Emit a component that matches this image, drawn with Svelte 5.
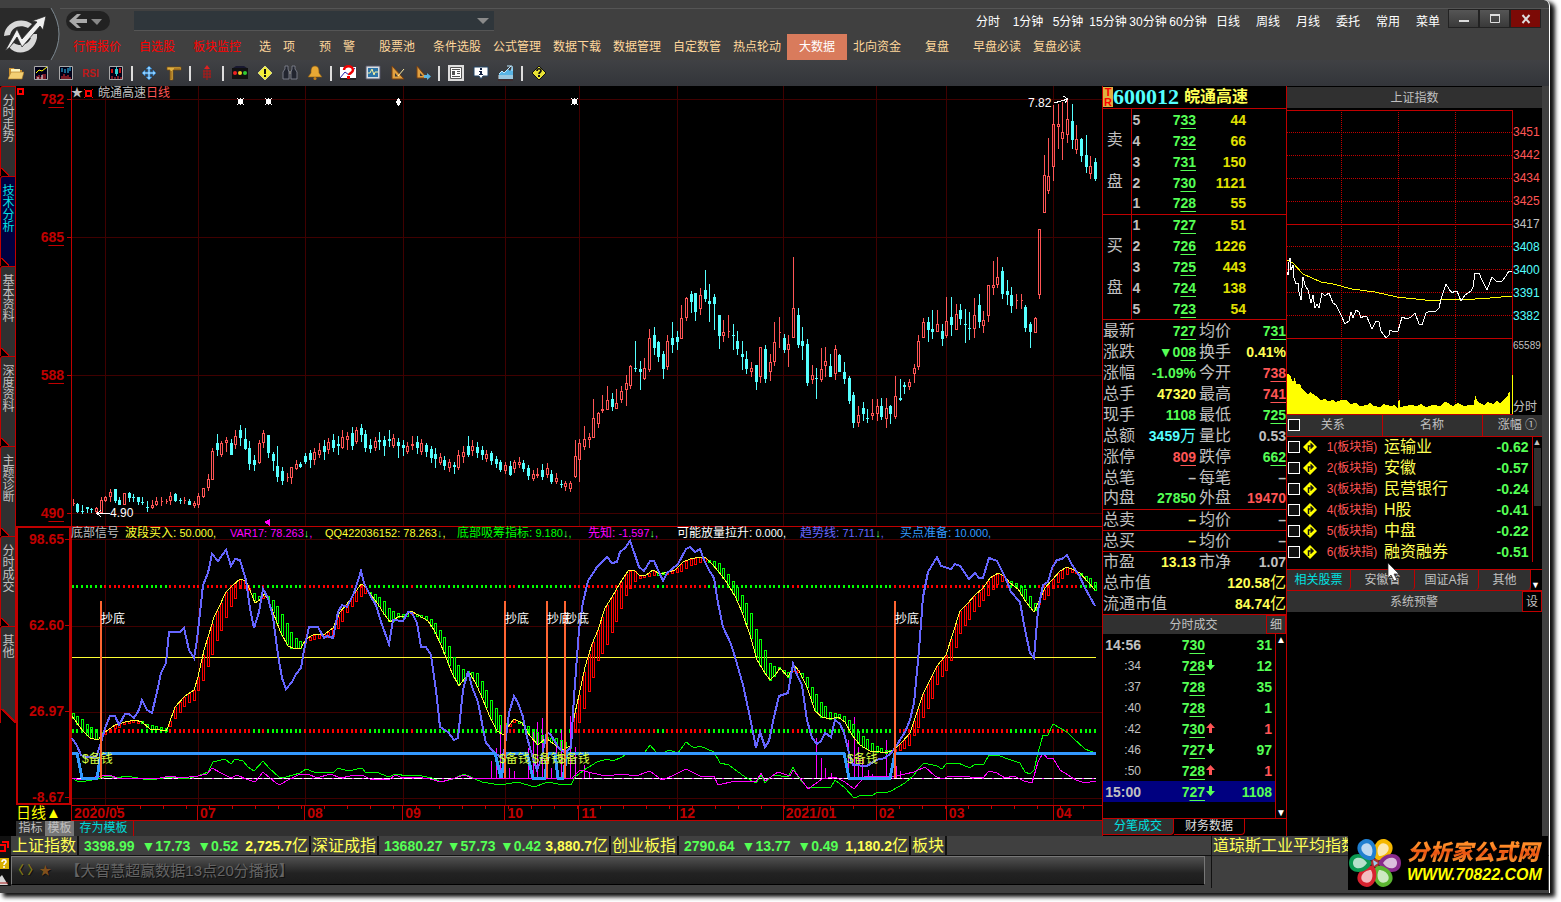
<script>
  const periods = ['分时', '1分钟', '5分钟', '15分钟', '30分钟', '60分钟', '日线', '周线', '月线', '委托', '常用', '菜单'];
  const menus = [
    '行情报价', '自选股', '板块监控', '选　项', '预　警', '股票池', '条件选股', '公式管理', '数据下载',
    '数据管理', '自定数管', '热点轮动', '大数据', '北向资金', '复盘', '早盘必读', '复盘必读',
  ];
  const sideTabs = ['分时走势', '技术分析', '基本资料', '深度资料', '主题诊断', '分时成交', '其他'];

  // '|' is a separator
  const tools = [
    'folder', 'line', 'kline', 'rsi', 'candle', '|', 'move', 'ruler', '|', 'chip', '|', 'lights', 'warn',
    'binoc', 'bell', '|', 'what', 'screen', 'tri', 'tri2', '|', 'news', 'info', 'trend', '|', 'help',
  ];

  const icons = {
    folder: '<path d="M1 3h5l1 2h7v9H1z" fill="#c98f2e"/><path d="M3 4h9v3H3z" fill="#fff3b8"/><path d="M0 14l3-7h13l-2 7z" fill="#f3cf73" stroke="#a87320" stroke-width=".6"/>',
    line: '<path d="M1.500 1.500h13v13h-13z" fill="#000018" stroke="#aaa"/><path d="M3 8l3-3 3 1 5-4" stroke="#ff0" fill="none"/><path d="M4 14v-3m2 3v-4m2 4v-2m2 2V9m2 5v-5" stroke="#e33"/><path d="M5 14v-2m4 2v-4" stroke="#fff"/>',
    kline: '<path d="M1.500 1.500h13v13h-13z" fill="#000018" stroke="#aaa"/><path d="M4 3v4m3-3v4m3-5v5m2-6v4" stroke="#3cf"/><path d="M4 14v-3m2 3v-5m2 5v-3m2 3v-4m2 4v-2" stroke="#e33"/>',
    rsi: '<text x="-1" y="12" font-size="10" font-weight="bold" fill="#c01818" font-family="Liberation Sans">RSI</text>',
    candle: '<path d="M1.500 1.500h13v13h-13z" fill="#000018" stroke="#aaa"/><path d="M3 4h2v4H3zM11 3h2v5h-2z" fill="#c11"/><path d="M7 4h3v5H7z" fill="#3cc"/><path d="M8.500 2v9" stroke="#3cc"/><path d="M4 14v-3m3 3v-2m3 2v-3m3 3v-2" stroke="#e33"/>',
    move: '<path d="M8 1l3 3H9v3h3V5l3 3-3 3V9H9v3h2l-3 3-3-3h2V9H4v2L1 8l3-3v2h3V4H5z" fill="#8fd0ff" stroke="#2878c0" stroke-width=".7"/>',
    ruler: '<path d="M1 2h14v3H7v10H4V5H1z" fill="#e0b040" stroke="#7a4d10" stroke-width=".7"/><path d="M9 3v2m2-2v2m2-2v2M4 7h2M4 9h2m-2 2h2m-2 2h2" stroke="#7a4d10"/>',
    chip: '<path d="M8 1v14M5 5v8m6-8v8M4 6h8m-8 3h8m-8 3h8" stroke="#b01818" stroke-width="1"/><path d="M8 0l3 4H5z" fill="#d22"/>',
    lights: '<path d="M0 3h16v11H0z" fill="#111"/><path d="M1 3l3-2h8l3 2z" fill="#181830"/><circle cx="3" cy="8" r="2" fill="#e22"/><circle cx="8" cy="8" r="2" fill="#ec2"/><circle cx="13" cy="8" r="2" fill="#3c3"/>',
    warn: '<path d="M8 1l7 7-7 7-7-7z" fill="#f2ee3a" stroke="#f7f7c0" stroke-width=".6"/><path d="M7 4h2v5H7zM7 10h2v2H7z" fill="#111"/>',
    binoc: '<path d="M3 1h3v3l1 3v7H1V7l2-3zM10 1h3v3l2 3v7H9V7l1-3z" fill="#22252f" stroke="#888c98" stroke-width=".8"/><path d="M7 6h2v3H7z" fill="#777"/>',
    bell: '<path d="M8 1c4 0 4 4 4 7l3 4H1l3-4c0-3 0-7 4-7z" fill="#e8a834" stroke="#8c5a10" stroke-width=".6"/><circle cx="8" cy="13.500" r="1.500" fill="#c98018"/>',
    what: '<path d="M0 2h16v12H0z" fill="#fff"/><path d="M0 13l5-6 4 3 6-7" stroke="#22a" fill="none"/><path d="M0 14h16" stroke="#222" stroke-width="2"/><path d="M4 5c0-5 9-5 9 0 0 3-4 3-4 5" stroke="#e00" stroke-width="2.500" fill="none"/><path d="M7 11h3v3H7z" fill="#e00"/>',
    screen: '<path d="M1 1h14v13H1z" fill="#d8dee4" stroke="#556"/><path d="M3 3h10v9H3z" fill="#2d74a8"/><path d="M3 8h2l2-4 2 6 1-3h3" stroke="#f4f0a0" fill="none"/>',
    tri: '<path d="M2 1l12 13H2z" fill="#e0a040" stroke="#7a4010"/><path d="M5 8l3 3.500H5z" fill="#35363a"/><path d="M8 11l6-7" stroke="#ffe9a0"/>',
    tri2: '<path d="M2 1l10 12H2z" fill="#e0a040" stroke="#7a4010"/><path d="M5 8l3 3H5z" fill="#35363a"/><path d="M9 10h3V8l4 3.500-4 3.500v-2H9z" fill="#5ab4e0"/>',
    news: '<path d="M0 0h16v16H0z" fill="#ddd"/><path d="M2.500 2.500h11v11h-11z" fill="#fff" stroke="#555"/><path d="M4 4.500h8M4 11.500h8" stroke="#555"/><path d="M4 6h3v4H4z" fill="#555"/><path d="M9 6.500h3m-3 2h3" stroke="#555"/>',
    info: '<path d="M1 2h14v9h-5l-2 3-2-3H1z" fill="#fff" stroke="#246"/><path d="M7 3h2v2H7zM6 6h3v3h1v1H6V9h1V7H6z" fill="#124"/>',
    trend: '<path d="M1 14V9l3-3 2 2 4-4 2 2 3-5v13z" fill="#58b4e4"/><path d="M1 9l3-3 2 2 7-7m-4 0h5v5" stroke="#bfe8ff" fill="none"/><path d="M0 11h15M0 13h15" stroke="#ddd"/><path d="M0 15h15" stroke="#422"/>',
    help: '<path d="M8 1l7 7-7 7-7-7z" fill="#e8e234" stroke="#111" stroke-width="1"/><path d="M6 6c0-3 4-3 4 0 0 1-2 1-2 3" stroke="#111" stroke-width="1.700" fill="none"/><path d="M7 10h2v2H7z" fill="#111"/>',
  };

  // direction (r = up day, c = down day), high, body top, body bottom, low; three units to a pixel
  const kline = `r1257,1269,1271,1278 c1268,1271,1296,1299 c1275,1293,1295,1302 c1280,1281,1286,1298 c1284,1286,1289,1298
    r1280,1284,1296,1300 r1250,1260,1298,1300 r1247,1251,1263,1266 r1228,1237,1252,1267 c1227,1227,1263,1268
    c1250,1259,1274,1275 r1238,1240,1274,1275 c1235,1239,1254,1266 c1242,1251,1253,1265 c1250,1251,1266,1276
    c1251,1265,1267,1274 c1262,1281,1283,1296 r1260,1275,1284,1288 r1252,1262,1275,1277 r1250,1263,1265,1278
    r1256,1262,1264,1272 r1236,1249,1263,1274 c1239,1242,1264,1267 c1253,1260,1262,1271 r1252,1260,1262,1273
    c1258,1263,1274,1276 r1262,1270,1279,1285 r1240,1249,1274,1284 r1224,1225,1250,1254 r1182,1197,1225,1233
    r1105,1113,1199,1200 c1061,1089,1109,1127 r1083,1089,1125,1131 r1070,1080,1089,1116 c1077,1090,1124,1125
    r1050,1067,1096,1108 c1035,1050,1074,1098 c1044,1077,1107,1110 c1083,1104,1152,1169 c1125,1140,1155,1173
    r1080,1090,1150,1152 r1050,1060,1088,1104 c1065,1066,1119,1134 c1116,1121,1143,1172 c1098,1158,1190,1206
    c1162,1174,1203,1214 r1179,1191,1193,1206 r1160,1162,1193,1212 r1140,1152,1168,1169 c1145,1151,1160,1165
    c1118,1128,1146,1152 c1110,1120,1140,1164 r1104,1116,1140,1155 r1090,1110,1125,1134 c1080,1098,1116,1140
    r1074,1086,1110,1122 c1062,1080,1104,1116 c1068,1092,1098,1125 r1050,1071,1104,1107 r1056,1068,1080,1110
    c1040,1059,1098,1110 r1041,1050,1086,1092 c1032,1045,1065,1086 c1050,1062,1104,1116 c1076,1095,1107,1119
    r1071,1083,1104,1113 c1056,1080,1086,1110 c1068,1080,1098,1128 c1050,1077,1083,1101 r1062,1074,1098,1104
    c1074,1086,1098,1134 c1080,1095,1104,1128 r1086,1098,1116,1122 r1068,1092,1098,1110 c1068,1086,1104,1122
    r1077,1089,1116,1125 c1089,1095,1116,1131 c1098,1107,1134,1149 c1104,1122,1137,1164 r1119,1131,1149,1155
    c1128,1140,1158,1170 r1137,1146,1164,1176 c1146,1155,1161,1182 r1110,1125,1164,1170 r1098,1116,1131,1149
    c1068,1098,1125,1131 r1080,1098,1113,1128 c1086,1101,1119,1134 c1098,1110,1125,1140 r1110,1122,1137,1146
    c1113,1119,1143,1155 c1128,1137,1152,1164 c1140,1146,1170,1176 r1146,1155,1173,1182 c1143,1158,1185,1188
    r1140,1146,1167,1179 r1131,1146,1155,1164 c1140,1149,1167,1176 c1155,1164,1188,1200 r1170,1182,1197,1203
    r1164,1182,1188,1194 c1152,1170,1191,1200 r1149,1164,1185,1194 c1170,1182,1206,1212 r1180,1194,1206,1212
    c1200,1213,1215,1224 r1203,1209,1220,1233 r1203,1209,1227,1236 r1080,1129,1191,1194 r1077,1089,1140,1206
    r1038,1077,1101,1110 r1059,1071,1079,1104 r957,1014,1074,1075 r997,999,1031,1044 r945,987,992,999
    r918,960,990,991 c939,957,981,993 r927,969,987,988 r918,933,960,969 r885,909,930,978 r855,857,918,926
    c783,864,866,876 c843,867,876,930 r833,864,897,899 r747,773,870,875 c741,765,804,825 c783,786,830,846
    c813,822,867,897 r765,783,860,870 c726,773,795,819 c753,771,786,810 r675,714,777,778 r651,654,714,723
    c633,642,666,699 c639,640,696,723 r624,645,687,705 c570,630,657,667 c612,663,672,726 c642,651,672,750
    c705,706,768,807 r720,756,768,786 r705,753,755,774 c732,765,767,810 c753,783,807,825 c783,822,831,870
    c813,837,867,882 r846,865,875,891 c855,856,906,930 r801,802,891,909 c795,807,897,909 r822,846,876,903
    r726,786,846,858 r711,757,759,804 c762,774,810,819 r765,792,810,861 r531,684,774,775 c684,705,795,804
    c741,783,798,840 c777,792,909,918 r855,885,900,912 c864,894,896,957 r804,867,900,906 r801,843,858,891
    c822,858,891,892 r795,807,882,900 c822,825,876,877 c846,876,897,912 c888,894,963,972 c936,945,1029,1044
    r978,1005,1029,1041 c966,984,1002,1023 c987,1014,1016,1029 r957,999,1007,1020 r957,978,1002,1023
    c954,978,1011,1020 r954,984,1017,1044 c975,978,1002,1032 r888,948,1011,1017 c897,954,960,963
    c906,915,921,942 r897,906,921,930 r852,864,882,909 r765,783,861,870 r714,726,773,775 c711,726,750,786
    c690,747,756,777 r690,732,755,756 c732,753,777,798 r651,723,768,774 c651,711,735,768 r672,702,749,750
    c672,690,717,735 c687,732,734,789 c696,744,746,780 r654,705,747,774 c642,675,726,744 r693,720,738,759
    r615,616,708,726 r543,615,623,645 r531,591,615,624 c561,573,642,657 c600,633,645,675 c621,645,678,699
    r642,660,664,687 r642,660,664,687 c675,681,744,756 c726,732,756,804 r711,714,759,760 r447,448,645,657
    r225,285,398,400 r174,288,333,342 r75,132,261,303 r72,132,140,207 r66,156,177,240 r60,117,165,189
    c72,123,180,207 r135,177,210,222 c174,177,228,246 c165,225,261,279 r228,258,282,297 c234,246,297,303`
    .trim().split(/\s+/);

  const barX = (i) => Math.round(72.8 + i * 4.646);

  let upPath = '';
  let downStem = '';
  let downBody = '';
  kline.forEach((s, i) => {
    const [hi, top, bot, lo] = s.slice(1).split(',').map((v) => Math.round(v / 3 + 80));
    const x = barX(i);
    if (s[0] === 'r') {
      const h = Math.max(bot - top, 1);
      upPath += `M${x + 0.5} ${hi}V${top}M${x + 0.5} ${bot}V${lo}M${x - 0.5} ${top + 0.5}h2v${h - 1}h-2z`;
    } else {
      downStem += `M${x + 0.5} ${hi}V${lo}`;
      downBody += `M${x - 1} ${top}h3v${Math.max(bot - top, 1)}h-3z`;
    }
  });

  // x, fast average, slow average
  const ribbon = `72,716,712 82,730,719 90,738,727 98,740,730 105,732,734 115,725,728 125,722,724 135,720,722 142,722,721
    150,729,725 160,730,727 166,731,728 168,727,729 175,707,718 185,696,705 194,690,700 198,677,690 204,650,677 209,634,663
    214,617,648 219,607,635 226,592,617 232,586,604 240,579,588 246,581,588 250,590,589 255,603,594 261,599,597
    264,594,597 268,599,596 273,612,600 280,631,610 288,646,625 293,648,636 301,648,642 306,639,641 315,634,638
    325,634,637 333,628,636 340,612,624 347,604,612 354,594,603 361,584,596 366,587,593 371,595,592 378,604,596
    384,614,601 390,622,609 398,617,613 405,616,614 411,611,613 418,615,614 428,621,617 434,630,621 441,645,632
    447,660,642 452,673,653 459,686,667 465,678,670 470,673,671 477,686,673 483,700,683 490,717,699 497,731,709
    504,735,722 508,727,726 514,719,722 522,723,721 530,736,727 538,745,733 546,738,737 555,745,738 562,750,740
    570,746,746 573,722,737 579,695,722 585,667,705 592,644,680 598,630,660 605,608,648 612,597,632 620,583,610
    628,571,590 634,570,582 640,576,577 646,575,577 653,570,575 660,574,572 668,572,573 675,570,572 683,562,570
    690,559,565 700,557,562 706,558,560 712,564,560 719,572,563 727,583,573 735,596,584 742,612,595 750,635,610
    757,660,632 765,673,650 770,680,663 776,674,668 780,668,667 788,677,672 794,665,671 799,671,670 807,687,677
    815,711,693 822,717,703 830,719,712 838,717,713 845,722,717 852,735,723 860,745,733 870,751,742 880,752,748
    888,752,750 894,750,751 902,742,749 910,733,744 917,712,729 923,694,717 929,682,706 937,666,684 946,655,670
    953,633,656 960,611,633 967,604,622 975,595,610 983,588,600 990,578,593 998,573,582 1004,576,580 1010,583,581
    1018,589,584 1026,602,590 1034,612,602 1038,603,605 1045,588,598 1052,580,589 1060,571,580 1067,567,574
    1074,570,572 1080,573,572 1088,582,577 1095,590,582`.trim().split(/\s+/).map((p) => p.split(',').map(Number));

  const fastLine = ribbon.map(([x, y]) => `${x},${y}`).join(' ');

  function ribbonAt(x) {
    let j = ribbon.findIndex((p) => p[0] >= x);
    if (j < 1) j = j < 0 ? ribbon.length - 1 : 1;
    const [a, b] = [ribbon[j - 1], ribbon[j]];
    const t = (x - a[0]) / (b[0] - a[0]);
    return [a[1] + (b[1] - a[1]) * t, a[2] + (b[2] - a[2]) * t];
  }

  let redBoxes = '';
  let greenBoxes = '';
  let redDots = '';
  let greenDots = '';
  for (let i = 0; i < kline.length; i++) {
    const x = barX(i);
    const [fast, slow] = ribbonAt(x);
    const top = Math.round(Math.min(fast, slow));
    const h = Math.max(Math.round(Math.abs(fast - slow)), 2);
    const box = `M${x - 0.5} ${top + 0.5}h2v${h}h-2z`;
    const dots = `M${x - 1} 585h2v3h-2zM${x - 1} 729h2v4h-2z`;
    if (fast < slow) {
      redBoxes += box;
      redDots += dots;
    } else {
      greenBoxes += box;
      greenDots += dots;
    }
  }

  const trendLine = `72,738 77,746 81,755 86,757 96,757 101,743 105,728 110,716 115,716 119,725 125,714 129,714 134,718
    139,710 142,700 147,710 152,713 157,692 161,673 166,663 169,632 180,632 184,628 189,650 194,658 197,640 203,585
    208,573 212,554 218,561 226,550 231,566 235,559 240,560 246,580 250,608 254,628 259,612 263,589 268,598 273,617
    278,655 282,678 286,689 292,682 296,674 301,668 304,650 309,627 318,627 324,638 327,636 333,638 338,612 342,605
    347,607 354,593 361,571 364,583 371,597 376,605 381,622 389,644 393,620 403,621 408,612 412,613 417,623 421,647
    426,647 431,655 436,690 440,727 448,732 454,740 458,738 463,690 468,671 472,687 478,702 482,723 486,743 493,751
    500,757 504,753 509,713 514,696 518,703 523,717 527,737 532,755 537,770 541,760 547,732 551,735 558,747 565,753
    571,747 574,697 579,630 583,602 588,581 597,567 607,557 612,563 617,562 620,552 625,548 630,541 635,555 639,567
    644,571 650,561 654,561 659,572 663,581 667,573 672,569 678,564 686,549 690,547 695,552 700,549 704,560 709,570
    714,578 718,603 723,627 731,644 735,657 743,685 750,717 756,748 760,732 765,747 769,741 774,717 779,696 788,693
    793,664 797,675 802,685 807,720 812,738 817,744 821,741 825,733 831,737 835,720 840,724 844,733 849,753 853,765
    867,766 876,760 885,758 891,753 895,748 905,732 910,720 914,703 919,650 923,597 928,572 937,557 941,566 951,569
    955,564 960,566 969,579 975,573 979,578 983,578 989,558 997,561 1002,571 1006,579 1011,592 1020,602 1025,630
    1030,653 1034,658 1038,610 1043,585 1048,582 1052,568 1057,560 1062,559 1067,555 1072,565 1079,575 1085,588 1095,606`;

  const readyLine = `72,753 77,753 82,778 97,778 101,753 495,753 501,778 506,753 527,753 533,778 545,778 548,753 555,753
    558,778 563,778 567,753 844,753 849,778 890,778 895,753 1096,753`;

  const chipLine = `72,778 77,781 86,781 98,779 107,776 118,778 125,776 132,777 143,779 157,779 170,777 186,779 198,776
    208,772 213,762 225,759 231,764 235,759 243,761 248,767 254,771 263,761 269,768 279,777 286,777 300,773 306,769
    314,772 323,773 334,772 338,768 348,771 362,768 366,773 376,772 389,777 395,774 408,776 417,775 432,778 441,782
    453,779 464,774 475,779 482,782 500,785 518,782 534,787 548,782 558,784 571,785 575,777 584,770 597,762 607,759
    613,761 622,757 630,752 645,752 650,745 656,752 663,753 669,750 678,753 686,742 694,748 700,746 714,752 720,763
    729,765 745,777 756,783 761,775 765,783 773,775 788,777 793,767 798,777 808,788 825,787 831,787 835,780 845,788
    854,798 862,795 871,796 878,792 885,793 891,791 905,783 914,775 919,768 924,763 937,766 942,769 946,764 958,763
    970,768 975,764 984,764 989,755 998,755 1005,758 1020,763 1025,772 1030,774 1034,770 1038,753 1043,735 1048,735
    1053,724 1067,732 1073,738 1085,749 1095,753`;

  const seerLine = `72,778 81,780 95,777 109,775 120,779 130,778 145,779 160,778 171,776 180,778 198,776 207,774 212,768
    221,773 231,778 237,775 246,779 255,782 263,772 271,779 279,785 290,779 300,774 308,774 317,778 330,774 341,778
    350,776 362,775 370,779 390,779 395,775 403,778 415,777 430,779 441,782 455,778 464,775 475,779 500,778 558,778
    572,778 580,770 592,773 606,776 622,774 636,776 650,771 662,780 672,776 686,769 700,776 714,776 718,785 735,781
    756,782 761,773 765,781 778,772 790,776 793,770 800,778 808,789 822,779 835,777 845,782 854,789 865,776 890,777
    905,774 914,772 925,767 935,776 942,779 950,776 970,777 983,778 989,771 997,773 1005,778 1014,776 1024,781
    1032,783 1038,762 1043,753 1048,759 1053,758 1060,770 1068,775 1076,780 1085,783 1096,781`;

  const spikes = [
    [491, 761], [496, 748], [500, 725], [509, 768], [514, 771], [528, 748], [533, 732], [537, 722], [542, 718],
    [551, 768], [556, 742], [561, 730], [570, 716], [575, 747], [584, 765], [589, 772], [816, 738], [821, 758],
    [825, 768], [831, 773], [848, 740], [854, 717], [858, 747], [862, 757], [868, 770], [872, 774], [886, 740],
    [896, 766], [900, 771],
  ];
  const signals = [101, 505, 547, 565, 895];
  const reserves = [82, 499, 532, 559, 847];

  const pct = (x) => `${((x - 71) / 1031) * 100}%`;

  // month labels with the x of their first trading day
  const months = [
    ['2020/05', 72], ['07', 198], ['08', 305], ['09', 403], ['10', 505], ['11', 579],
    ['12', 677], ['2021/01', 783], ['02', 876], ['03', 946], ['04', 1053],
  ];
  const monthCols = months.map(([, x], i) => `${(months[i + 1]?.[1] ?? 1102) - x}fr`).join(' ');

  const legend = [
    ['底部信号', '', '#c0c0c0', false],
    ['波段买入:', '50.000,', '#ffff33', false],
    ['VAR17:', '78.263', '#ff00ff', true],
    ['QQ422036152:', '78.263', '#ffff33', true],
    ['底部吸筹指标:', '9.180', '#00ff00', true],
    ['先知:', '-1.597', '#ff00ff', true],
    ['可能放量拉升:', '0.000,', '#ffffff', false],
    ['趋势线:', '71.711', '#6666ff', true],
    ['买点准备:', '10.000,', '#3399ff', false],
  ];

  const book = [
    ['卖', [[5, '733', 44], [4, '732', 66], [3, '731', 150], [2, '730', 1121], [1, '728', 55]]],
    ['买', [[1, '727', 51], [2, '726', 1226], [3, '725', 443], [4, '724', 138], [5, '723', 54]]],
  ];

  // label, value, colour, underline the last two digits
  const quote = [
    [['最新', '727', 'g', true], ['均价', '731', 'g', true]],
    [['涨跌', '▼008', 'g', true], ['换手', '0.41%', 'y']],
    [['涨幅', '-1.09%', 'g'], ['今开', '738', 'r', true]],
    [['总手', '47320', 'y'], ['最高', '741', 'r', true]],
    [['现手', '1108', 'g'], ['最低', '725', 'g', true]],
    [['总额', '3459万', 'c'], ['量比', '0.53', 'w']],
    [['涨停', '809', 'r', true], ['跌停', '662', 'g', true]],
    [['总笔', '–', 'w'], ['每笔', '–', 'w']],
    [['内盘', '27850', 'g'], ['外盘', '19470', 'r']],
    [['总卖', '–', 'y'], ['均价', '–', 'w']],
    [['总买', '–', 'y'], ['均价', '–', 'w']],
    [['市盈', '13.13', 'y'], ['市净', '1.07', 'w']],
    [['总市值', '120.58亿', 'y']],
    [['流通市值', '84.74亿', 'y']],
  ];

  const deals = [
    ['14:56', '730', '', 31], [':34', '728', 'down', 12], [':37', '728', '', 35], [':40', '728', '', 1],
    [':42', '730', 'up', 1], [':46', '727', 'down', 97], [':50', '728', 'up', 1], ['15:00', '727', 'down', 1108],
  ];

  const levels = [
    ['3451', 'r'], ['3442', 'r'], ['3434', 'r'], ['3425', 'r'], ['3417', 'w'],
    ['3408', 'c'], ['3400', 'c'], ['3391', 'c'], ['3382', 'c'],
  ];

  const indexLine = `1287,272 1288,275 1289,262 1290,258 1291,270 1293,265 1294,278 1296,284 1298,283 1299,292 1301,300
    1303,277 1305,285 1308,290 1311,303 1313,295 1315,308 1317,304 1319,308 1322,293 1325,296 1329,293 1333,303 1336,305
    1339,311 1341,315 1345,324 1349,321 1351,312 1353,318 1356,310 1359,312 1361,318 1364,316 1367,317 1372,329 1376,321
    1379,322 1381,331 1386,338 1389,335 1390,330 1394,332 1398,331 1402,317 1407,319 1411,317 1415,313 1419,324 1422,325
    1426,313 1430,311 1436,311 1439,308 1441,299 1446,284 1449,289 1452,293 1455,291 1457,291 1461,301 1465,295 1471,291
    1473,287 1475,273 1479,273 1482,280 1487,290 1492,277 1497,282 1502,281 1506,276 1509,271 1512,271`;
  const averageLine = `1287,260 1293,263 1303,274 1321,282 1333,284 1352,289 1375,292 1397,297 1425,300 1440,300 1456,299
    1475,299 1490,298 1512,296`;
  const volume = `1287,414 1287,374 1290,375 1293,382 1295,377 1296,384 1300,384 1302,389 1305,392 1308,395 1310,392 1313,394
    1316,396 1320,400 1325,399 1328,401 1333,400 1336,402 1341,400 1346,400 1350,404 1356,403 1360,406 1367,405 1370,402
    1373,406 1380,407 1383,404 1391,406 1394,405 1398,409 1399,393 1400,407 1405,406 1410,405 1417,406 1421,404 1426,407
    1433,405 1440,406 1445,402 1448,403 1453,406 1458,403 1464,406 1470,405 1474,405 1475,395 1478,402 1484,405 1488,402
    1493,404 1497,401 1500,403 1505,398 1508,395 1509,392 1510,392 1510,414`;

  const boards = [
    ['1(板块指)', '运输业', '-0.62'], ['2(板块指)', '安徽', '-0.57'], ['3(板块指)', '民营银行', '-0.24'],
    ['4(板块指)', 'H股', '-0.41'], ['5(板块指)', '中盘', '-0.22'], ['6(板块指)', '融资融券', '-0.51'],
  ];
  const boardTabs = ['相关股票', '安徽省', '国证A指', '其他'];

  const indices = [
    ['上证指数', '3398.99', '▼17.73', '▼0.52', '2,725.7亿'],
    ['深证成指', '13680.27', '▼57.73', '▼0.42', '3,880.7亿'],
    ['创业板指', '2790.64', '▼13.77', '▼0.49', '1,180.2亿'],
  ];

  const petals = ['#f5b800', '#8a2a8c', '#5cb531', '#d8232f', '#0b9a52', '#1f7fd0'];
</script>

{#snippet price(v)}{v.slice(0, -2)}<u>{v.slice(-2)}</u>{/snippet}

<div class="window">
  <header>
    <svg class="logo" width="60" height="52" viewBox="0 0 60 52" aria-hidden="true">
      <path d="M0 0h51q16 26 0 52H0z" fill="#2a2a2a" />
      <path d="M51 0q16 26 0 52" fill="none" stroke="#7c8890" stroke-width="1" />
      <path d="M32 16C20 8 5 15 4 28l6-1c2-8 10-11 18-7zM9 39c8 10 25 6 28-9v-4h-9l-1 4h4c-3 7-11 9-17 5z" fill="#d8d8d8" />
      <path d="M5 43L17 21l5 10 15-17-5-1 14-5-3 14-3-4-18 21-5-10-7 10z" fill="#f0f0f0" stroke="#2a2a2a" stroke-width=".8" />
    </svg>
    <div class="head-rows">
      <div class="title-row">
        <button class="back" aria-label="后退">
          <svg width="44" height="20" viewBox="0 0 44 20">
            <path d="M10 0h24a10 10 0 0 1 0 20H10A10 10 0 0 1 10 0z" fill="#222" />
            <path d="M3 10l8-7h4l-5 5h11v4H10l5 5h-4z" fill="#aaa" />
            <path d="M25 8h11l-5 6z" fill="#888" />
          </svg>
        </button>
        <select class="address" aria-label="地址"><option></option></select>
        <svg class="caret" width="12" height="6" viewBox="0 0 12 6" aria-hidden="true"><path d="M0 0h12L6 6z" fill="#8a8a8a" /></svg>
        <nav class="periods">
          {#each periods as p}<button>{p}</button>{/each}
        </nav>
        <div class="win-buttons">
          <button aria-label="最小化"><svg width="12" height="12"><path d="M1 8h10" stroke="#ddd" stroke-width="2" /></svg></button>
          <button aria-label="最大化"><svg width="12" height="12"><path d="M1.500 2.500h9v7h-9z" fill="none" stroke="#ddd" /><path d="M1 2h10" stroke="#ddd" stroke-width="2" /></svg></button>
          <button class="close" aria-label="关闭"><svg width="12" height="12"><path d="M2.500 2l7 8m0-8l-7 8" stroke="#ddd" stroke-width="2" /></svg></button>
        </div>
      </div>
      <nav class="menu">
        {#each menus as m, i}
          <button class:red={i < 3} class:active={m === '大数据'}>{m}</button>
        {/each}
      </nav>
    </div>
  </header>

  <div class="toolbar">
    {#each tools as t}
      {#if t === '|'}
        <i class="sep"></i>
      {:else}
        <button aria-label={t}><svg width="16" height="16" viewBox="0 0 16 16">{@html icons[t]}</svg></button>
      {/if}
    {/each}
  </div>

  <main>
    <nav class="side">
      {#each sideTabs as t, i}
        <button class:active={i === 1} class:last={i === sideTabs.length - 1}>{t}</button>
      {/each}
    </nav>

    <section class="charts">
      <div class="panel">
        <div class="axis">
          <svg class="pin" width="9" height="9" aria-hidden="true"><path d="M2 2h5v5H2z" fill="none" stroke="#f00" stroke-width="2" /></svg>
          {#each ['782', '685', '588', '490'] as v}<span>{@render price(v)}</span>{/each}
        </div>
        <div class="plot">
          <svg class="k" viewBox="71 86 1031 440" preserveAspectRatio="none" shape-rendering="crispEdges" aria-label="日K线">
            <path d="M72 99.500H1102M72 237.500H1102M72 375.500H1102M72 513.500H1102M105.500 86V526" stroke="#400000" />
            {#each months.slice(1) as [, x]}<path d="M{x + 0.5} 86V526" stroke="#400000" />{/each}
            <path d={upPath} fill="none" stroke="#ff5555" />
            <path d={downStem} stroke="#55ffff" />
            <path d={downBody} fill="#55ffff" />
            {#each [240, 268, 574] as x}
              <path d="M{x - 2} 99h5v5h-5zM{x - 3} 98h1v1h-1zM{x + 3} 98h1v1h-1zM{x - 3} 104h1v1h-1zM{x + 3} 104h1v1h-1zM{x} 98h1v7h-1z" fill="#fff" />
            {/each}
            <path d="M398 98h1v1h1v2h1v2h-1v2h-1v1h-1v-1h-1v-2h-1v-2h1v-2h1z" fill="#fff" />
            <path d="M97 513.500h13M101 510l-4 3.500 4 3.500M1054 103l14-4M1063 96l5 3-3 4" fill="none" stroke="#fff" />
            <path d="M264 522l6-3v7z" fill="#ff00ff" />
          </svg>
          <div class="caption">
            <span class="star">★</span>
            <svg width="9" height="9" aria-hidden="true"><path d="M2 2h5v5H2z" fill="none" stroke="#f00" stroke-width="2" /><path d="M0 0l2 2m5 5l2 2M9 0L7 2M2 7L0 9" stroke="#f00" /></svg>
            <b>皖通高速<em>日线</em></b>
          </div>
          <span class="mark" style="left:{pct(110)};top:420px">4.90</span>
          <span class="mark" style="left:{pct(1028)};top:10px">7.82</span>
        </div>
      </div>

      <div class="panel lower">
        <div class="axis boxed">
          {#each ['98.65', '62.60', '26.97', '-8.67'] as v}<span>{v}</span>{/each}
        </div>
        <div class="plot">
          <div class="legend">
            {#each legend as [name, value, color, down]}
              <span style="color:{color}"><b class:cjk={!/^[A-Z]/.test(name)}>{name}</b> {value}{#if down}<i>↓</i>,{/if}</span>
            {/each}
          </div>
          <svg class="ind" viewBox="71 539 1031 266" preserveAspectRatio="none" shape-rendering="crispEdges" aria-label="底部信号">
            <path d="M72 539.500H1102M72 626.500H1102M72 712.500H1102M72 798.500H1102" stroke="#400000" />
            <path d="M105.500 539V805" stroke="#400000" />
            {#each months.slice(1) as [, x]}<path d="M{x + 0.5} 539V805" stroke="#400000" />{/each}
            <path d={redDots} fill="#ff0000" />
            <path d={greenDots} fill="#00ff00" />
            <path d="M72 657.500H1096" stroke="#ffff33" />
            <path d="M72 778.500H1096" stroke="#fff" />
            <path d="M72 778.500H1096" stroke="#ff00ff" stroke-dasharray="2 8" />
            {#each spikes as [x, y]}<path d="M{x + 0.5} {y}V778" stroke="#ff00ff" />{/each}
            <polyline points={chipLine} stroke="#00ff00" />
            <polyline points={seerLine} stroke="#ff00ff" />
            <path d={redBoxes} fill="none" stroke="#ff0000" />
            <path d={greenBoxes} fill="none" stroke="#00ff00" />
            <polyline points={fastLine} stroke="#ffff33" />
            <polyline points={trendLine} stroke="#6666ff" stroke-width="2" />
            <polyline points={readyLine} stroke="#3399ff" stroke-width="3" />
            {#each signals as x}<path d="M{x} 601V778" stroke="#ff6633" stroke-width="2" />{/each}
          </svg>
          {#each signals as x}<span class="mark" style="left:{pct(x)};top:86px">抄底</span>{/each}
          {#each reserves as x}<span class="mark lime" style="left:{pct(x)};top:226px">$备钱</span>{/each}
        </div>
      </div>

      <div class="timeline">
        <button class="cycle">日线▲</button>
        <div class="months" style="grid-template-columns:{monthCols}">
          {#each months as [m]}<span>{m}</span>{/each}
        </div>
      </div>
      <div class="templates">
        <button>指标</button>
        <button class="picked">模板</button>
        <button class="save">存为模板</button>
      </div>
    </section>

    <section class="quote">
      <h2><span class="tr">T<br />R</span><span class="code">600012</span> 皖通高速</h2>
      {#each book as [side, rows]}
        <table class="book">
          <colgroup><col style="width:28px" /><col style="width:16px" /><col style="width:49px" /><col style="width:50px" /><col /></colgroup>
          <tbody>
            {#each rows as [n, p, vol], i}
              <tr>
                {#if i === 0}<th rowspan="5">{side}<br />盘</th>{/if}
                <td class="w lv">{n}</td>
                <td class="g">{@render price(p)}</td>
                <td class="vol">{vol}</td>
                <td></td>
              </tr>
            {/each}
          </tbody>
        </table>
      {/each}
      <table class="facts">
        <colgroup><col style="width:32px" /><col style="width:61px" /><col style="width:36px" /><col /></colgroup>
        <tbody>
          {#each quote as row, i}
            <tr class:line={i >= 8 && i <= 10}>
              {#each row as [label, value, color, under]}
                <th colspan={row.length === 1 ? 2 : 1}>{label}</th>
                <td class={color} colspan={row.length === 1 ? 2 : 1}>
                  {#if under}{@render price(value)}{:else if value.endsWith('亿') || value.endsWith('万')}{value.slice(0, -1)}<span class="unit">{value.slice(-1)}</span>{:else}{value}{/if}
                </td>
              {/each}
            </tr>
          {/each}
        </tbody>
      </table>
      <div class="bar deals-bar"><span>分时成交</span><button>细</button></div>
      <div class="deals">
        <table>
          <colgroup><col style="width:38px" /><col style="width:64px" /><col style="width:12px" /><col /></colgroup>
          <tbody>
            {#each deals as [time, p, dir, vol], i}
              <tr class:current={i === deals.length - 1}>
                <td class="w" class:sec={time.startsWith(':')}>{time}</td>
                <td class="g">{@render price(p)}</td>
                <td class="dir">
                  {#if dir === 'down'}
                    <svg width="9" height="11" aria-label="跌"><path d="M3 0h3v5h3L4.500 10 0 5h3z" fill="#5f5" /></svg>
                  {:else if dir === 'up'}
                    <svg width="9" height="11" aria-label="涨"><path d="M3 10h3V5h3L4.500 0 0 5h3z" fill="#f55" /></svg>
                  {/if}
                </td>
                <td class={dir === 'up' ? 'r' : 'g'}>{vol}</td>
              </tr>
            {/each}
          </tbody>
        </table>
        <div class="scroll"><span>▲</span><span class="end">▼</span></div>
      </div>
      <div class="tabs quote-tabs"><button class="on">分笔成交</button><button>财务数据</button></div>
    </section>

    <aside>
      <div class="bar"><span>上证指数</span></div>
      <div class="index">
        <svg viewBox="1287 109 226 306" preserveAspectRatio="none" shape-rendering="crispEdges" aria-label="上证指数分时">
          <g stroke="#c00000">
            <path d="M1287 132.500h225M1287 155.500h225M1287 178.500h225M1287 201.500h225M1287 246.500h225M1287 269.500h225M1287 292.500h225M1287 315.500h225M1341.500 110v304M1398.500 110v304M1455.500 110v304" stroke-dasharray="1 1" />
            <path d="M1287 110.500h225.500V414.500H1287M1287 224.500h225M1287 338.500h225" fill="none" />
          </g>
          <polygon points={volume} fill="#ff0" />
          <path d="M1512.500 375V414" stroke="#ff0" />
          <polyline points={averageLine} stroke="#ff0" />
          <polyline points={indexLine} stroke="#fff" />
        </svg>
        <div class="levels">
          {#each levels as [v, color]}<span class={color}>{v}</span>{/each}
          <span class="w max">65589</span>
          <span class="w kind">分时</span>
        </div>
      </div>
      <table class="boards">
        <colgroup><col style="width:15px" /><col style="width:20px" /><col style="width:60px" /><col style="width:100px" /><col style="width:50px" /><col /></colgroup>
        <thead>
          <tr>
            <th><input type="checkbox" aria-label="全选" /></th>
            <th colspan="2" class="rule">关系</th>
            <th class="rule">名称</th>
            <th colspan="2" class="chg">涨幅 ①</th>
          </tr>
        </thead>
        <tbody>
          {#each boards as [rel, name, change], i}
            <tr>
              <td><input type="checkbox" aria-label={name} /></td>
              <td>
                <svg width="14" height="14" viewBox="0 0 14 14" aria-hidden="true">
                  <path d="M7 0l7 7-7 7-7-7z" fill="#ff0" /><path d="M5.500 11V6H9M7.500 3.500L10 6l-2.500 2.500" fill="none" stroke="#111" stroke-width="1.500" />
                </svg>
              </td>
              <td class="rel">{rel}</td>
              <td class="name">{name}</td>
              <td class="g num">{change}</td>
              {#if i === 0}<td class="track" rowspan="6"><span>▲</span><i></i></td>{/if}
            </tr>
          {/each}
        </tbody>
      </table>
      <div class="tabs board-tabs">
        {#each boardTabs as t, i}<button class:on={i === 0}>{t}</button>{/each}
        <span class="w">▼</span>
      </div>
      <div class="bar alert"><span>系统预警</span><button>设</button></div>
      <svg class="cursor" width="13" height="20" viewBox="0 0 13 20" aria-hidden="true">
        <path d="M1 1v15l3-3 3 6 3-1-3-6h5z" fill="#fff" stroke="#222" stroke-width=".7" />
      </svg>
    </aside>
  </main>

  <footer>
    <div class="gutter">
      <svg width="11" height="52" viewBox="0 0 11 52" aria-hidden="true">
        <path d="M2 6h6v6M0 9h5v6H0" fill="none" stroke="#f00" stroke-width="2" />
        <path d="M0 22h9v11H0z" fill="#d8b000" /><path d="M2 26c0-3 4-3 4 0 0 1-2 1-2 3m0 1v2" stroke="#fff" stroke-width="1.500" fill="none" />
        <path d="M2 39l6 10H0v-8z" fill="#d8d8d8" /><path d="M0 47h8" stroke="#a22" />
      </svg>
    </div>
    <div class="feeds">
      <div class="ticker">
        {#each indices as [name, last, diff, rate, amount]}
          <span class="iname">{name}</span>
          <span class="ivals"><b class="g">{last}</b><b class="g">{diff}</b><b class="g">{rate}</b><b class="y">{amount.slice(0, -1)}<span class="unit">亿</span></b></span>
        {/each}
        <span class="iname">板块</span>
      </div>
      <div class="news">
        <b class="arrows">〈 〉</b><b class="fav">★</b><span>【大智慧超赢数据13点20分播报】</span>
      </div>
    </div>
    <div class="world"><span>道琼斯工业平均指数</span></div>
    <div class="brand">
      <svg width="54" height="54" viewBox="-27 -27 54 54" aria-hidden="true">
        {#each petals as c, i}
          <g transform="rotate({30 + i * 60})">
            <path d="M0-3C-12-9-12-26 0-26S12-9 0-3z" fill={c} />
            <path d="M0-8C-7-12-7-22 0-22S7-12 0-8z" fill="#fff" opacity=".7" />
          </g>
        {/each}
        <circle r="4" fill="#a33" /><path d="M-2-3l5 3-4 3z" fill="#9ad0f0" />
      </svg>
      <div><strong>分析家公式网</strong><a href="#top">WWW.70822.COM</a></div>
    </div>
  </footer>
</div>

<style>
  :global(body) {
    margin: 0;
    background: #fff;
  }

  .window {
    position: relative;
    margin: 0 11px 9px 0;
    border-right: 1px solid #fff;
    border-top-right-radius: 6px;
    background: #404040;
    box-shadow: 4px 3px 4px 1px #111;
    color: #c0c0c0;
    font: 12px/14px 'Liberation Sans', 'Noto Sans CJK SC', sans-serif;
  }

  button {
    margin: 0;
    padding: 0;
    border: 0;
    background: none;
    color: inherit;
    font: inherit;
    white-space: nowrap;
  }

  svg { display: block; }
  polyline { fill: none; }
  table { width: 100%; border-collapse: collapse; table-layout: fixed; }
  td, th { padding: 0; font-weight: inherit; }
  u { text-underline-offset: 3px; }

  .g { color: #5f5; }
  .r { color: #f55; }
  .y { color: #ff5; }
  .c { color: #5ff; }
  .w { color: #c0c0c0; }

  /* Header */
  header { display: flex; height: 60px; }
  .logo { margin-top: 8px; flex: none; }
  .head-rows { flex: 1; min-width: 0; margin-top: 8px; border-top: 1px solid #555; }

  .title-row { display: flex; height: 25px; padding: 0 8px 0 6px; }
  .back { margin: 2px 24px 0 0; height: 20px; }
  .address {
    width: 360px;
    height: 20px;
    margin-top: 2px;
    border: 0;
    border-bottom: 1px solid #555;
    background: #2f363b;
    appearance: none;
  }
  .caret { margin: 9px 0 0 -17px; }
  .periods { display: flex; margin-left: auto; color: #fff; }
  .periods button { width: 40px; }
  .win-buttons { display: flex; height: 19px; }
  .win-buttons button {
    display: grid;
    place-items: center;
    width: 31px;
    border: 1px solid #222;
    background: linear-gradient(#555, #3a3a3a);
  }
  .win-buttons .close { background: #7c0a06; }

  .menu { display: flex; height: 26px; padding-left: 7px; color: #ffd79b; }
  .menu button { width: 60px; }
  .menu .red { color: #f00; }
  .menu .active { background: #d97b5c; color: #fff; }

  .toolbar {
    display: flex;
    align-items: center;
    height: 26px;
    padding-left: 3px;
    background: linear-gradient(#404144, #33353a);
  }
  .toolbar button { display: grid; place-items: center; width: 25px; }
  .sep { width: 2px; height: 15px; margin: 0 3px; background: #ddd; }

  main { display: flex; margin-right: 7px; background: #000; }

  /* Vertical tabs */
  .side { display: flex; flex-direction: column; flex: none; width: 16px; }
  .side button {
    width: 16px;
    height: 90px;
    padding: 7px 2px 0 0;
    border: solid #c00000;
    border-width: 1px 1px 0 1px;
    border-top-left-radius: 3px;
    background:
      linear-gradient(to top right, #000 48%, #c00000 48% 58%, transparent 58%) left bottom / 8px 8px no-repeat,
      #303030;
    line-height: 12px;
    text-align: left;
    writing-mode: vertical-rl;
  }
  .side .active { background-color: #000040; color: #00e0e0; }
  .side .last {
    height: 97px;
    background-size: 14px 14px;
  }

  /* Charts */
  .charts { display: flex; flex: 1; flex-direction: column; min-width: 0; }
  .panel { display: flex; }
  .axis {
    position: relative;
    display: flex;
    flex: none;
    flex-direction: column;
    justify-content: space-between;
    box-sizing: border-box;
    width: 55px;
    padding: 5px 7px 5px 0;
    color: #c00000;
    font-size: 14px;
    font-weight: bold;
    line-height: 16px;
    text-align: right;
  }
  .axis span {
    margin-right: -7px;
    padding-right: 7px;
    background: linear-gradient(#c00000, #c00000) right center / 4px 1px no-repeat;
  }
  .axis.boxed { padding: 5px 5px 0 0; border: 2px solid #c00000; line-height: 12px; }
  .axis.boxed span { margin-right: -5px; padding-right: 5px; }
  .pin { position: absolute; left: 0; top: 1px; }
  .plot { position: relative; flex: 1; min-width: 0; overflow: hidden; box-shadow: inset 1px 0 #c00000; }
  .plot svg.k { width: 100%; height: 440px; }
  .plot svg.ind { width: 100%; height: 266px; }

  .caption { position: absolute; left: 0; top: 0; display: flex; align-items: center; gap: 1px; }
  .caption b { margin-left: 4px; font-weight: normal; }
  .caption em { color: #f55; font-style: normal; }
  .mark { position: absolute; color: #fff; white-space: nowrap; }
  .lime { color: #d4ff40; }

  .legend {
    display: grid;
    grid-template-columns: 54fr 105fr 95fr 132fr 131fr 89fr 123fr 100fr 202fr;
    height: 12px;
    border-top: 1px solid #c00000;
    font-size: 11px;
    line-height: 13px;
    white-space: nowrap;
  }
  .legend b { font-weight: normal; }
  .legend .cjk { font-size: 12px; }
  .legend i { color: #5f5; font-style: normal; }

  .timeline { display: flex; height: 16px; }
  .cycle { width: 55px; color: #ff0; font-size: 15px; line-height: 16px; text-align: left; }
  .months {
    display: grid;
    flex: 1;
    box-sizing: border-box;
    border: solid #c00000;
    border-width: 1px 0;
    background: repeating-linear-gradient(to right, #c00000 0 1px, transparent 1px 23px) left top / 100% 3px no-repeat;
    color: #c00000;
    font-size: 14px;
    font-weight: bold;
  }
  .months span { padding-left: 2px; border-left: 1px solid #c00000; }

  .templates { display: flex; height: 15px; background: #303030; }
  .templates button { width: 29px; line-height: 15px; }
  .templates .picked { background: #777; }
  .templates .save { width: 60px; border-right: 1px solid #c00000; color: #00d8d8; }

  /* Quote panel */
  .quote {
    display: flex;
    flex: none;
    flex-direction: column;
    box-sizing: border-box;
    width: 185px;
    border: solid #c00000;
    border-width: 0 1px;
    font-size: 14px;
    line-height: 20px;
  }
  h2 {
    display: flex;
    align-items: center;
    box-sizing: border-box;
    height: 23px;
    margin: 0;
    border-bottom: 1px solid #c00000;
    color: #ff5;
    font-size: 16px;
    white-space: nowrap;
  }
  .tr { width: 10px; background: #e0b040; color: #f00; font-size: 11px; line-height: 10px; text-align: center; }
  .code { margin-right: 5px; color: #5ff; font-family: 'Liberation Serif', serif; font-size: 22px; }
  .quote table { font-weight: bold; }
  .quote tr { height: 21px; }
  .quote td { text-align: right; white-space: nowrap; }
  .book { border-bottom: 1px solid #c00000; }
  .book th {
    padding-right: 4px;
    border-right: 1px solid #c00000;
    font-size: 16px;
    font-weight: normal;
    line-height: 42px;
  }
  .book td.lv { padding-left: 1px; text-align: left; }
  .vol { color: #e0e000; }
  .facts th { font-size: 16px; font-weight: normal; text-align: left; white-space: nowrap; }
  .facts th:nth-child(3) { padding-left: 3px; }
  .facts .line { border-bottom: 1px solid #c00000; }
  .unit { font-size: 16px; font-weight: normal; }

  .bar {
    display: flex;
    align-items: center;
    height: 21px;
    background: #303030;
    font-size: 12px;
    line-height: 14px;
  }
  .bar span { flex: 1; text-align: center; }
  .bar button { align-self: stretch; width: 20px; border: 1px solid #c00000; }
  .deals-bar { box-sizing: border-box; height: 20px; padding-left: 18px; border-top: 1px solid #c00000; }

  .deals { display: flex; flex: 1; border-bottom: 1px solid #c00000; }
  .deals table { align-self: flex-start; width: 172px; }
  .deals td:last-child { padding-right: 3px; }
  .deals td:first-child { padding-left: 2px; }
  .deals td.sec { font-size: 12px; font-weight: normal; }
  .dir svg { margin-left: 1px; }
  .current { background: #000080; }
  .scroll {
    display: flex;
    flex: 1;
    flex-direction: column;
    justify-content: space-between;
    border-left: 1px solid #c00000;
    color: #fff;
    font-size: 10px;
    line-height: 11px;
  }

  .tabs { display: flex; font-size: 12px; line-height: 15px; }
  .tabs button { border: solid #c00000; border-width: 0 1px 1px 0; border-bottom-right-radius: 4px; }
  .tabs .on { background: #303030; color: #00e0e0; }
  .quote-tabs { height: 17px; }
  .quote-tabs button { width: 71px; height: 16px; color: #ddd; }
  .quote-tabs .on { color: #00e0e0; }

  /* Index panel */
  aside { position: relative; flex: none; width: 255px; }
  aside > .bar { margin-top: 1px; }
  .index { display: flex; margin-top: 1px; }
  .index svg { width: 226px; height: 306px; }
  .levels { display: flex; flex: 1; flex-direction: column; padding-top: 12px; }
  .levels span { height: 23px; line-height: 23px; }
  .levels .max { height: 36px; font-size: 10px; line-height: 36px; }
  .levels .kind { margin-top: auto; height: 16px; line-height: 16px; }

  .boards thead tr { height: 21px; border-bottom: 1px solid #c00000; background: #303030; }
  .boards tbody tr { height: 21px; }
  .boards th.rule { border-right: 1px solid #c00000; text-align: center; }
  .boards th.rule:nth-child(2) { padding-right: 18px; }
  .boards th.chg { padding-right: 5px; text-align: right; }
  .boards input {
    display: block;
    width: 12px;
    height: 12px;
    margin: 0 0 0 1px;
    border: 1px solid #fff;
    background: #111;
    appearance: none;
  }
  .boards td svg { margin-left: 1px; }
  .rel { color: #f55; text-align: center; white-space: nowrap; }
  .name { padding-left: 2px; color: #ff5; font-size: 16px; line-height: 20px; }
  .num { padding-right: 3px; font-size: 14px; font-weight: bold; text-align: right; }
  .track { border-left: 1px solid #c00000; font-size: 9px; line-height: 11px; vertical-align: top; }
  .track i { display: block; width: 7px; height: 58px; margin-left: 1px; background: #303030; }

  .board-tabs { height: 20px; margin-top: 7px; border: solid #c00000; border-width: 1px 0; background: #303030; line-height: 19px; }
  .board-tabs button { width: 64px; border-bottom: 0; }
  .board-tabs button:nth-child(4) { width: 52px; }
  .board-tabs span { width: 11px; background: #000; font-size: 9px; line-height: 30px; color: #fff; }
  aside > .alert { margin-top: 0; padding-left: 1px; }
  .alert span { padding-left: 18px; }
  .alert button { background: #000; }
  .cursor { position: absolute; left: 100px; top: 476px; }

  /* Footer */
  footer { position: relative; display: flex; height: 57px; }
  .gutter { width: 11px; background: #111; height: 50px; overflow: hidden; }
  .feeds { flex: 1; min-width: 0; }
  .ticker { display: flex; height: 19px; border-bottom: 1px solid #111; line-height: 20px; white-space: nowrap; }
  .iname { padding: 0 1px; border-right: 2px solid #111; color: #ff5; font-size: 16px; }
  .ivals {
    display: flex;
    justify-content: space-between;
    box-sizing: border-box;
    width: 232px;
    padding: 0 1px 0 5px;
    border-right: 2px solid #111;
    font-size: 14px;
  }
  .news {
    display: flex;
    align-items: center;
    height: 27px;
    margin-right: 6px;
    border: 1px solid #777;
    border-bottom-color: #000;
    background: linear-gradient(#505050, #222 60%, #1c1c1c);
    color: #646464;
    font-size: 15px;
    text-shadow: 1px 1px #111;
  }
  .arrows { color: #807818; font-size: 12px; }
  .fav { color: #80501c; font-size: 12px; }
  .news span { margin-left: 14px; }
  .world { width: 337px; height: 52px; border-left: 1px solid #111; }
  .world span { display: block; padding-left: 1px; border-bottom: 1px solid #222; color: #ff5; font-size: 16px; line-height: 19px; }

  .brand {
    position: absolute;
    top: 0;
    right: 1px;
    display: flex;
    align-items: center;
    width: 200px;
    height: 54px;
    background: #000;
  }
  .brand div { margin-left: 5px; }
  .brand strong {
    display: block;
    background: linear-gradient(#ff8c28 20%, #e85010 50%, #ffb040);
    background-clip: text;
    color: transparent;
    font-size: 22px;
    font-style: italic;
    font-weight: 900;
    line-height: 24px;
    white-space: nowrap;
  }
  .brand a { color: #ff0; font: italic bold 16px/20px 'Liberation Sans', sans-serif; text-decoration: none; }
</style>
